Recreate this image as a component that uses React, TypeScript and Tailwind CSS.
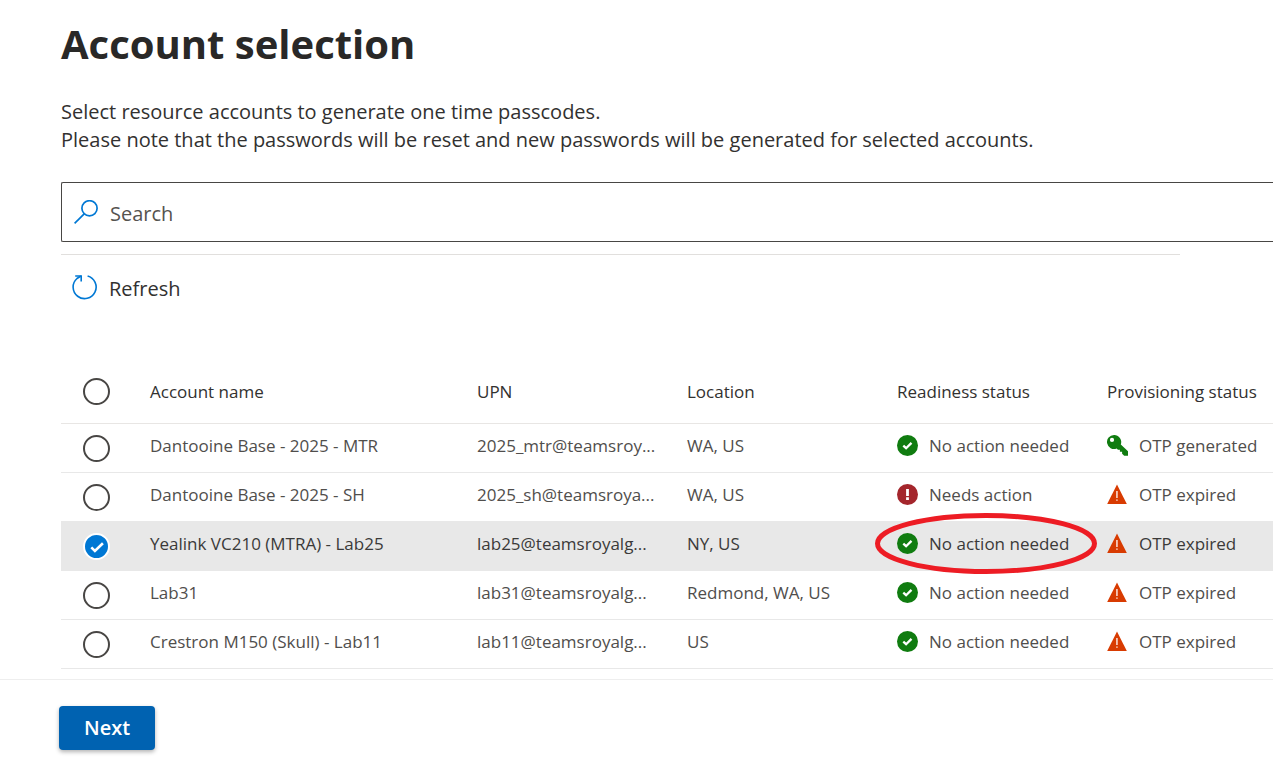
import { useState } from "react";

type Readiness = "ready" | "action";
type Provisioning = "generated" | "expired";

interface Account {
  id: string;
  name: string;
  upn: string;
  location: string;
  readiness: Readiness;
  provisioning: Provisioning;
  highlighted?: boolean;
}

const accounts: Account[] = [
  { id: "mtr", name: "Dantooine Base - 2025 - MTR", upn: "2025_mtr@teamsroy...", location: "WA, US", readiness: "ready", provisioning: "generated" },
  { id: "sh", name: "Dantooine Base - 2025 - SH", upn: "2025_sh@teamsroya...", location: "WA, US", readiness: "action", provisioning: "expired" },
  { id: "lab25", name: "Yealink VC210 (MTRA) - Lab25", upn: "lab25@teamsroyalg...", location: "NY, US", readiness: "ready", provisioning: "expired", highlighted: true },
  { id: "lab31", name: "Lab31", upn: "lab31@teamsroyalg...", location: "Redmond, WA, US", readiness: "ready", provisioning: "expired" },
  { id: "lab11", name: "Crestron M150 (Skull) - Lab11", upn: "lab11@teamsroyalg...", location: "US", readiness: "ready", provisioning: "expired" },
];

function SearchIcon() {
  return (
    <svg className="size-6 shrink-0" viewBox="0 0 24 24" fill="none" stroke="#0078d4" strokeWidth="1.7" aria-hidden="true">
      <circle cx="15.5" cy="8.3" r="7.6" />
      <path d="M10.2 13.8 0.6 23.4" />
    </svg>
  );
}

function RefreshIcon() {
  return (
    <svg className="size-[25px] shrink-0" viewBox="0 0 25 25" fill="none" stroke="#0078d4" strokeWidth="1.6" aria-hidden="true">
      <path d="M15.6 1A11.5 11.5 0 1 1 5 3.5L9 1" />
      <path d="M3.2 1h6v5.4" />
    </svg>
  );
}

function ReadyIcon() {
  return (
    <svg className="size-[21px] shrink-0" viewBox="0 0 21 21" fill="none" aria-hidden="true">
      <circle cx="10.5" cy="10.5" r="10.5" fill="#107c10" />
      <path d="m6.3 10.6 2.8 2.6 5.4-5.3" stroke="#fff" strokeWidth="2.3" />
    </svg>
  );
}

function ActionIcon() {
  return (
    <svg className="size-[21px] shrink-0" viewBox="0 0 21 21" aria-hidden="true">
      <circle cx="10.5" cy="10.5" r="10.5" fill="#a4262c" />
      <path d="M9.1 5h2.8v7H9.1zM9.1 13.2h2.8v2.7H9.1z" fill="#fff" />
    </svg>
  );
}

function KeyIcon() {
  return (
    <svg className="size-[21px] shrink-0" viewBox="0 0 21 21" aria-hidden="true">
      <path
        fillRule="evenodd"
        fill="#107c10"
        d="M7 0a7 7 0 1 0 2.6 13.5l1.4 1.2h1.9v2h2.2v2l2.1 2.1H21v-4.6l-7.2-6.8A7 7 0 0 0 7 0ZM5 2.8a2.1 2.1 0 1 1 0 4.2 2.1 2.1 0 0 1 0-4.2Z"
      />
    </svg>
  );
}

function ExpiredIcon() {
  return (
    <svg className="size-[21px] shrink-0" viewBox="0 0 21 21" aria-hidden="true">
      <path d="M10 0.6 19.8 20H0.2Z" fill="#d83b01" />
      <path d="M9.3 7h1.3v7H9.3zM9.3 15.4h1.3v1.4H9.3z" fill="#fff" />
    </svg>
  );
}

interface RowCheckProps {
  label: string;
  checked: boolean;
  onChange: () => void;
}

function RowCheck({ label, checked, onChange }: RowCheckProps) {
  return (
    <label className="grid size-[27px] cursor-pointer place-items-center">
      <input
        type="checkbox"
        aria-label={label}
        checked={checked}
        onChange={onChange}
        className="col-start-1 row-start-1 size-[27px] cursor-pointer appearance-none rounded-full border-2 border-[#484644] bg-white checked:border-white checked:bg-[#0078d4]"
      />
      {checked && (
        <svg className="pointer-events-none col-start-1 row-start-1 size-4" viewBox="0 0 16 16" fill="none" aria-hidden="true">
          <path d="m2.3 8.4 3.6 3.5 8-7.6" stroke="#fff" strokeWidth="2.6" />
        </svg>
      )}
    </label>
  );
}

export default function App() {
  const [selected, setSelected] = useState<string[]>(["lab25"]);
  const [query, setQuery] = useState("");

  const toggle = (id: string) =>
    setSelected((ids) => (ids.includes(id) ? ids.filter((x) => x !== id) : [...ids, id]));
  const allSelected = selected.length === accounts.length;
  const rows = accounts.filter((a) => a.name.toLowerCase().includes(query.toLowerCase()));

  return (
    <div className="min-h-screen overflow-x-hidden bg-white font-['Open_Sans','Noto_Sans',sans-serif] text-[#323130]">
      <main className="pt-4 pl-[61px]">
        <h1 className="text-[40px] leading-14 font-bold text-[#292827]">Account selection</h1>
        <p className="mt-[26px] text-xl leading-7">
          Select resource accounts to generate one time passcodes.
          <br />
          Please note that the passwords will be reset and new passwords will be generated for selected accounts.
        </p>

        <label className="mt-7 flex h-15 items-center gap-3 rounded-l-xs border border-r-0 border-[#484644] pl-3">
          <SearchIcon />
          <input
            type="search"
            placeholder="Search"
            aria-label="Search"
            value={query}
            onChange={(e) => setQuery(e.target.value)}
            className="min-w-0 flex-1 bg-transparent pt-1 text-xl outline-none placeholder:text-[#55534f]"
          />
        </label>

        <hr className="mt-3 mr-[93px] border-[#e1dfdd]" />

        <button type="button" className="mt-4 ml-[11px] flex h-9 items-start gap-3 pt-1 text-xl">
          <RefreshIcon />
          Refresh
        </button>

        <table className="mt-[53px] w-full table-fixed border-collapse text-left text-[17px] whitespace-nowrap">
          <colgroup>
            <col className="w-[89px]" />
            <col />
            <col className="w-[210px]" />
            <col className="w-[210px]" />
            <col className="w-[210px]" />
            <col className="w-[166px]" />
          </colgroup>
          <thead>
            <tr className="h-[63px] border-b border-[#e8e6e4]">
              <th scope="col" className="pl-[22px] font-normal">
                <RowCheck
                  label="Select all accounts"
                  checked={allSelected}
                  onChange={() => setSelected(allSelected ? [] : accounts.map((a) => a.id))}
                />
              </th>
              <th scope="col" className="font-normal">Account name</th>
              <th scope="col" className="font-normal">UPN</th>
              <th scope="col" className="font-normal">Location</th>
              <th scope="col" className="font-normal">Readiness status</th>
              <th scope="col" className="font-normal">Provisioning status</th>
            </tr>
          </thead>
          <tbody className="text-[#504e4c]">
            {rows.map((a) => {
              const on = selected.includes(a.id);
              return (
                <tr
                  key={a.id}
                  className={`h-[49px] border-b border-[#e8e8e8] ${on ? "bg-[#e8e8e8] text-[#3b3a39]" : ""}`}
                >
                  <td className="pt-0.5 pl-[22px]">
                    <RowCheck label={`Select ${a.name}`} checked={on} onChange={() => toggle(a.id)} />
                  </td>
                  <td className="pb-1">{a.name}</td>
                  <td className="pb-1">{a.upn}</td>
                  <td className="pb-1">{a.location}</td>
                  <td className="pb-1">
                    <div className="relative flex items-center gap-[11px]">
                      {a.readiness === "ready" ? <ReadyIcon /> : <ActionIcon />}
                      {a.readiness === "ready" ? "No action needed" : "Needs action"}
                      {a.highlighted && (
                        <svg
                          className="pointer-events-none absolute -top-[18px] -left-[22px] h-[61px] w-[222px]"
                          viewBox="0 0 222 61"
                          fill="none"
                          aria-hidden="true"
                        >
                          <ellipse cx="111" cy="30.5" rx="108.5" ry="28" stroke="#ed1c24" strokeWidth="5" />
                        </svg>
                      )}
                    </div>
                  </td>
                  <td className="pb-1">
                    <div className="flex items-center gap-[11px]">
                      {a.provisioning === "generated" ? <KeyIcon /> : <ExpiredIcon />}
                      {a.provisioning === "generated" ? "OTP generated" : "OTP expired"}
                    </div>
                  </td>
                </tr>
              );
            })}
          </tbody>
        </table>
      </main>

      <footer className="mt-[10px] border-t border-[#eeeeee] pt-[26px] pb-2 pl-[59px]">
        <button
          type="button"
          className="h-11 rounded bg-[#0062b1] px-[25px] text-xl font-semibold text-white shadow-[0_2px_4px_rgba(0,0,0,0.3)]"
        >
          Next
        </button>
      </footer>
    </div>
  );
}
